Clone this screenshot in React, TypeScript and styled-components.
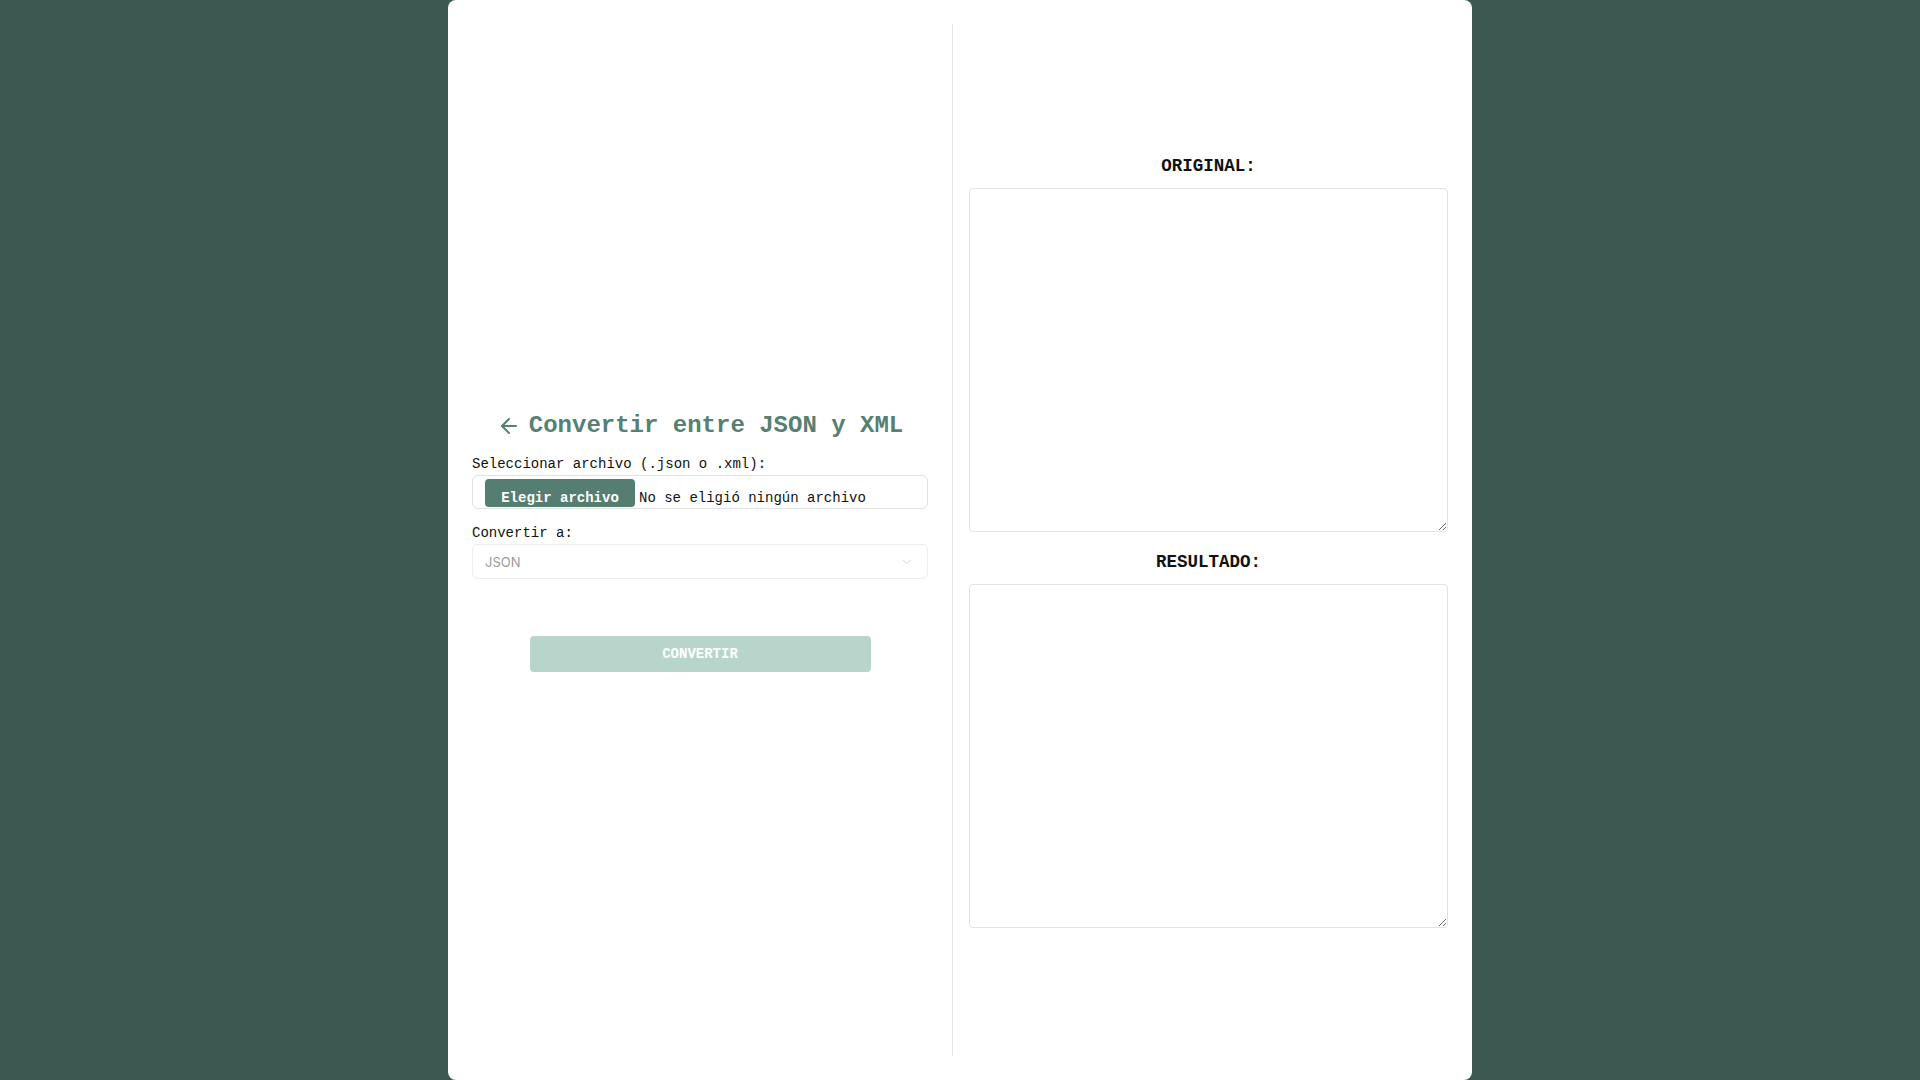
import React from "react";
import styled, { createGlobalStyle } from "styled-components";
import { ArrowLeft, ChevronDown } from "lucide-react";

const GlobalStyle = createGlobalStyle`
  html, body { margin: 0; padding: 0; }
  body {
    background: #3a5750;
    font-family: "Liberation Mono", monospace;
  }
  * { box-sizing: border-box; }
`;

const Page = styled.div`
  display: flex;
  justify-content: center;
  min-height: 100vh;
`;

const Card = styled.main`
  width: 1024px;
  height: 1080px;
  background: #ffffff;
  border-radius: 8px;
  padding: 24px;
  display: flex;
`;

const LeftColumn = styled.section`
  width: 456px;
  margin-right: 24px;
  display: flex;
  flex-direction: column;
  justify-content: center;
`;

const RightColumn = styled.section`
  flex: 1;
  border-left: 1px solid #e5e5e5;
  padding-left: 16px;
  padding-top: 2px;
  display: flex;
  flex-direction: column;
  justify-content: center;
`;

const TitleRow = styled.div`
  display: flex;
  align-items: center;
  justify-content: center;
  gap: 8px;
  height: 32px;
  margin-top: 2px;
  margin-bottom: 12px;
  color: #577f73;
`;

const Title = styled.h1`
  margin: 0;
  font-family: "Liberation Mono", monospace;
  font-size: 24px;
  line-height: 32px;
  font-weight: 700;
  color: #577f73;
`;

const Label = styled.label<{ $gap?: number }>`
  display: block;
  font-family: "Liberation Mono", monospace;
  font-size: 14px;
  line-height: 20px;
  color: #111;
  margin-bottom: ${(p) => p.$gap ?? 1}px;
`;

const FileBox = styled.div`
  display: flex;
  align-items: flex-end;
  height: 34px;
  border: 1px solid #e2e2e2;
  border-radius: 6px;
  padding: 3px 12px 1px 12px;
  margin-bottom: 14px;
  gap: 4px;
`;

const FileButton = styled.span`
  display: flex;
  align-items: center;
  justify-content: center;
  height: 28px;
  width: 150px;
  padding-top: 9px;
  background: #557d71;
  color: #ffffff;
  border-radius: 4px;
  font-family: "Liberation Mono", monospace;
  font-weight: 700;
  font-size: 14px;
  line-height: 16px;
`;

const FileName = styled.span`
  font-family: "Liberation Mono", monospace;
  font-size: 14px;
  line-height: 16px;
  color: #111;
  padding-bottom: 1px;
`;

const SelectWrap = styled.div`
  position: relative;
  height: 35px;
  margin-bottom: 57px;
`;

const Select = styled.select`
  appearance: none;
  width: 100%;
  height: 35px;
  border: 1px solid #ececec;
  border-radius: 6px;
  background: #fff;
  padding: 0 12px;
  font-family: Inter, "Liberation Sans", sans-serif;
  font-size: 13px;
  color: #9a9a9a;
  outline: none;
`;

const SelectIcon = styled.span`
  position: absolute;
  right: 14px;
  top: 11px;
  display: flex;
  color: #cfcfcf;
  pointer-events: none;
`;

const ConvertButton = styled.button`
  align-self: center;
  width: 341px;
  height: 36px;
  border: none;
  border-radius: 4px;
  background: #b8d5cc;
  color: #ffffff;
  font-family: "Liberation Mono", monospace;
  font-weight: 700;
  font-size: 14px;
`;

const PanelLabel = styled.h2<{ $top?: number }>`
  margin: ${(p) => p.$top ?? 0}px 0 11px 0;
  text-align: center;
  font-family: "Liberation Mono", monospace;
  font-weight: 700;
  font-size: 17.5px;
  line-height: 22px;
  color: #111;
`;

const TextArea = styled.textarea`
  display: block;
  width: 100%;
  height: 344px;
  border: 1px solid #e2e2e2;
  border-radius: 4px;
  padding: 8px;
  font-family: "Liberation Mono", monospace;
  font-size: 13px;
  outline: none;
`;

export default function App() {
  return (
    <>
      <GlobalStyle />
      <Page>
        <Card>
          <LeftColumn>
            <TitleRow>
              <ArrowLeft size={24} strokeWidth={2} />
              <Title>Convertir entre JSON y XML</Title>
            </TitleRow>
            <Label>Seleccionar archivo (.json o .xml):</Label>
            <FileBox>
              <FileButton>Elegir archivo</FileButton>
              <FileName>No se eligió ningún archivo</FileName>
            </FileBox>
            <Label>Convertir a:</Label>
            <SelectWrap>
              <Select defaultValue="json">
                <option value="json">JSON</option>
                <option value="xml">XML</option>
              </Select>
              <SelectIcon>
                <ChevronDown size={14} strokeWidth={1.5} />
              </SelectIcon>
            </SelectWrap>
            <ConvertButton>CONVERTIR</ConvertButton>
          </LeftColumn>
          <RightColumn>
            <PanelLabel>ORIGINAL:</PanelLabel>
            <TextArea />
            <PanelLabel $top={19}>RESULTADO:</PanelLabel>
            <TextArea />
          </RightColumn>
        </Card>
      </Page>
    </>
  );
}
